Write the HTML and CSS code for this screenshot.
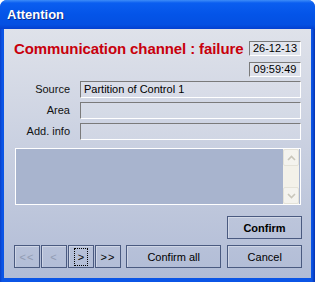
FILE: index.html
```html
<!DOCTYPE html>
<html>
<head>
  <title>Attention</title>
  <link rel="stylesheet" href="styles.css">
</head>
<body>
  <div class="window">
    <div class="titlebar">Attention</div>
    <div class="client">
      <div class="head-row">
        <span class="alarm">Communication channel : failure</span>
        <span class="stamp">26-12-13</span>
      </div>
      <div class="time-row">
        <span class="stamp">09:59:49</span>
      </div>
      <div class="fields">
        <label>Source</label>
        <div class="field">Partition of Control 1</div>
        <label>Area</label>
        <div class="field"></div>
        <label>Add. info</label>
        <div class="field"></div>
      </div>
      <div class="memo">
        <div class="memo-text"></div>
        <div class="scrollbar">
          <div class="sb-btn">
            <svg width="9" height="6" viewBox="0 0 9 6"><path d="M1 5 L4.5 1.5 L8 5" fill="none" stroke="#c9c6bb" stroke-width="1.6"/></svg>
          </div>
          <div class="sb-track"></div>
          <div class="sb-btn">
            <svg width="9" height="6" viewBox="0 0 9 6"><path d="M1 1 L4.5 4.5 L8 1" fill="none" stroke="#c9c6bb" stroke-width="1.6"/></svg>
          </div>
        </div>
      </div>
      <div class="confirm-row">
        <button class="btn btn-main">Confirm</button>
      </div>
      <div class="bottom-row">
        <div class="nav">
          <button class="btn nav-btn" disabled>&lt;&lt;</button>
          <button class="btn nav-btn" disabled>&lt;</button>
          <button class="btn nav-btn"><span class="focus">&gt;</span></button>
          <button class="btn nav-btn">&gt;&gt;</button>
        </div>
        <button class="btn btn-all">Confirm all</button>
        <button class="btn btn-cancel">Cancel</button>
      </div>
    </div>
  </div>
</body>
</html>
```

FILE: styles.css
```css
html, body {
  margin: 0;
  padding: 0;
}

body {
  font-family: "Liberation Sans", Arial, sans-serif;
  font-size: 11px;
  color: #000;
}

.window {
  width: 315px;
  height: 282px;
  box-sizing: border-box;
  padding: 0 4px 4px 4px;
  background: linear-gradient(to right, #0a3fc8, #0b55e6 2px, #0b55e6 calc(100% - 3px), #0632b0);
  border-radius: 7px 7px 0 0;
  display: flex;
  flex-direction: column;
}

.titlebar {
  height: 29px;
  margin: 0 -4px;
  padding: 0 7px;
  box-sizing: border-box;
  border-radius: 7px 7px 0 0;
  background: linear-gradient(#3d8cf8, #0a5ef0 3px, #0454e8 50%, #0450e2 85%, #0440d0);
  color: #fff;
  font-weight: bold;
  font-size: 13px;
  line-height: 29px;
  text-shadow: 1px 1px 0 #0a2a88;
}

.client {
  flex: 1;
  background: linear-gradient(#dfe2ea, #b1bcd6);
  padding: 12px 10px 0 10px;
  display: flex;
  flex-direction: column;
}

.head-row {
  display: flex;
  justify-content: space-between;
  align-items: center;
  height: 15px;
}

.alarm {
  color: #c8000c;
  font-weight: bold;
  font-size: 15px;
  letter-spacing: -0.1px;
}

.stamp {
  width: 52px;
  height: 15px;
  box-sizing: border-box;
  border: 1px solid;
  border-color: #7a7a7a #ffffff #ffffff #7a7a7a;
  background: rgba(255, 255, 255, 0.18);
  text-align: center;
  line-height: 13px;
  font-size: 11px;
}

.time-row {
  display: flex;
  justify-content: flex-end;
  margin-top: 6px;
}

.fields {
  display: grid;
  grid-template-columns: 56px 1fr;
  column-gap: 10px;
  row-gap: 4px;
  margin-top: 4px;
}

.fields label {
  text-align: right;
  line-height: 17px;
  color: #111;
}

.field {
  height: 17px;
  box-sizing: border-box;
  border: 1px solid;
  border-color: #7a7a7a #ffffff #ffffff #7a7a7a;
  background: rgba(255, 255, 255, 0.12);
  padding-left: 3px;
  line-height: 15px;
  font-size: 11px;
}

.memo {
  margin: 8px 0 0 1px;
  height: 57px;
  box-sizing: border-box;
  border: 1px solid #ffffff;
  background: #a8b4ce;
  display: flex;
}

.memo-text {
  flex: 1;
}

.scrollbar {
  width: 16px;
  margin-right: 1px;
  background: #f3f1e9;
  display: flex;
  flex-direction: column;
}

.sb-btn {
  height: 17px;
  box-sizing: border-box;
  border: 1px solid #e4e2d8;
  border-radius: 2px;
  background: #f4f3ee;
  display: flex;
  align-items: center;
  justify-content: center;
}

.sb-track {
  flex: 1;
}

.btn {
  font-family: "Liberation Sans", Arial, sans-serif;
  font-size: 11px;
  color: #000;
  background: transparent;
  border: 1px solid #4a5a80;
  box-shadow: inset 1px 1px 0 rgba(255, 255, 255, 0.35);
  height: 23px;
  padding: 0;
  margin: 0;
}

.confirm-row {
  display: flex;
  justify-content: flex-end;
  margin-top: 11px;
  margin-right: -1px;
}

.btn-main {
  width: 75px;
  font-weight: bold;
}

.bottom-row {
  display: flex;
  margin-top: 6px;
  margin-right: -1px;
}

.nav {
  display: flex;
  gap: 1px;
}

.nav-btn {
  width: 26px;
  font-size: 11px;
  letter-spacing: 1px;
}

.nav-btn:disabled {
  color: #919bb2;
}

.focus {
  display: inline-block;
  padding: 1px 2px 1px 3px;
  border: 1px dotted #000;
  line-height: 14px;
}

.btn-all {
  width: 96px;
  margin-left: 5px;
}

.btn-cancel {
  width: 75px;
  margin-left: 6px;
}
```
